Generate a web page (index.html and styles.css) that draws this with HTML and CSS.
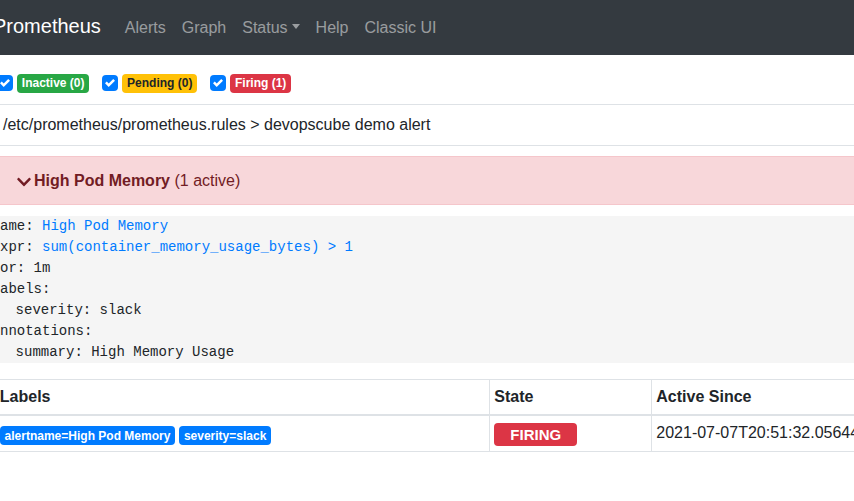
FILE: index.html
```html
<!DOCTYPE html>
<html>
<head>
<meta charset="utf-8">
<link rel="stylesheet" href="styles.css">
</head>
<body>
<nav class="navbar">
  <a class="brand">Prometheus</a>
  <ul class="nav">
    <li class="nav-link">Alerts</li>
    <li class="nav-link">Graph</li>
    <li class="nav-link">Status<span class="caret"></span></li>
    <li class="nav-link">Help</li>
    <li class="nav-link">Classic UI</li>
  </ul>
</nav>
<main class="page">
  <div class="filters">
    <label class="filter">
      <span class="check"><svg viewBox="0 0 8 8" width="10" height="10"><path fill="#fff" d="M6.564.75l-3.59 3.612-1.538-1.55L0 4.26l2.974 2.99L8 2.193z"/></svg></span>
      <span class="badge badge-green">Inactive (0)</span>
    </label>
    <label class="filter">
      <span class="check"><svg viewBox="0 0 8 8" width="10" height="10"><path fill="#fff" d="M6.564.75l-3.59 3.612-1.538-1.55L0 4.26l2.974 2.99L8 2.193z"/></svg></span>
      <span class="badge badge-yellow">Pending (0)</span>
    </label>
    <label class="filter">
      <span class="check"><svg viewBox="0 0 8 8" width="10" height="10"><path fill="#fff" d="M6.564.75l-3.59 3.612-1.538-1.55L0 4.26l2.974 2.99L8 2.193z"/></svg></span>
      <span class="badge badge-red">Firing (1)</span>
    </label>
  </div>

  <div class="group-header">/etc/prometheus/prometheus.rules &gt; devopscube demo alert</div>

  <div class="alert-row">
    <span class="chevron"><svg viewBox="0 0 448 512" width="14" height="16"><path fill="#721c24" d="M207.029 381.476L12.686 187.132c-9.373-9.373-9.373-24.569 0-33.941l22.667-22.667c9.357-9.357 24.522-9.375 33.901-.04L224 284.505l154.745-154.021c9.379-9.335 24.544-9.317 33.901.04l22.667 22.667c9.373 9.373 9.373 24.569 0 33.941L240.971 381.476c-9.373 9.372-24.569 9.372-33.942 0z"/></svg></span><strong>High Pod Memory</strong>&nbsp;(1 active)
  </div>

  <pre class="rule"><code class="rule-code"><div>name: <a class="link">High Pod Memory</a></div><div>expr: <a class="link">sum(container_memory_usage_bytes) &gt; 1</a></div><div>for: 1m</div><div>labels:</div><div class="indent">severity: slack</div><div>annotations:</div><div class="indent">summary: High Memory Usage</div></code></pre>

  <table class="alerts">
    <colgroup>
      <col class="c1"><col class="c2"><col class="c3">
    </colgroup>
    <thead>
      <tr><th>Labels</th><th>State</th><th>Active Since</th></tr>
    </thead>
    <tbody>
      <tr>
        <td><span class="badge badge-blue">alertname=High Pod Memory</span><span class="badge badge-blue">severity=slack</span></td>
        <td><span class="state">FIRING</span></td>
        <td class="since">2021-07-07T20:51:32.056443265Z</td>
      </tr>
    </tbody>
  </table>
</main>
</body>
</html>
```
FILE: styles.css
```css
html, body {
  margin: 0;
  padding: 0;
  background: #fff;
  overflow: hidden;
}
body {
  font-family: "Liberation Sans", Arial, sans-serif;
  font-size: 16px;
  line-height: 1.5;
  color: #212529;
  width: 854px;
}
.navbar {
  height: 55px;
  background: #343a40;
  display: flex;
  align-items: center;
  white-space: nowrap;
}
.brand {
  font-size: 20px;
  line-height: 30px;
  color: #fff;
  margin-left: -7px;
  margin-right: 16px;
  padding-bottom: 4px;
}
.nav {
  list-style: none;
  margin: 0;
  padding: 0;
  display: flex;
}
.nav-link {
  padding: 0 8px;
  color: rgba(255, 255, 255, 0.5);
  line-height: 24px;
}
.caret {
  display: inline-block;
  margin-left: 4px;
  vertical-align: 4px;
  border-top: 5px solid rgba(255, 255, 255, 0.5);
  border-left: 4.5px solid transparent;
  border-right: 4.5px solid transparent;
}
.page {
  margin-left: -5px;
  width: 1100px;
}
.filters {
  display: flex;
  align-items: center;
  margin: 19px 0 12px 2px;
  height: 18px;
}
.filter {
  display: flex;
  align-items: center;
  margin-right: 13px;
}
.check {
  width: 16px;
  height: 16px;
  border-radius: 4px;
  background: #007bff;
  display: flex;
  align-items: center;
  justify-content: center;
  margin-right: 4px;
}
.badge {
  display: inline-block;
  font-size: 12px;
  font-weight: 700;
  line-height: 1;
  padding: 3.5px 4.8px;
  border-radius: 4px;
  color: #fff;
  white-space: nowrap;
}
.badge-green { background: #28a745; }
.badge-yellow { background: #ffc107; color: #212529; }
.badge-red { background: #dc3545; }
.badge-blue { background: #007bff; margin-right: 4px; }
.group-header {
  border-top: 1px solid #dee2e6;
  border-bottom: 1px solid #dee2e6;
  padding: 8px 8px 8px;
  line-height: 24px;
}
.alert-row {
  margin-top: 10px;
  background: #f8d7da;
  border: 1px solid #f5c6cb;
  color: #721c24;
  padding: 12px 18px 11px;
  line-height: 24px;
  display: flex;
  align-items: center;
}
.chevron {
  width: 20px;
  display: flex;
  justify-content: center;
  margin-top: 1px;
}
.rule {
  margin: 11px 0 16px -3.4px;
  background: #f5f5f5;
  font-family: "Liberation Mono", "Courier New", monospace;
  font-size: 14px;
  line-height: 21px;
  color: #212529;
  padding: 0;
}
.rule-code {
  display: block;
  font-family: inherit;
  font-size: inherit;
}
.indent {
  margin-left: 24px;
}
.link {
  color: #007bff;
}
.alerts {
  border-collapse: collapse;
  table-layout: fixed;
  width: 1000px;
}
.c1 { width: 494px; }
.c2 { width: 162px; }
.c3 { width: 344px; }
.alerts th, .alerts td {
  border: 1px solid #dee2e6;
  padding: 4.8px;
  text-align: left;
  line-height: 24px;
  white-space: nowrap;
}
.alerts th {
  vertical-align: middle;
}
.alerts td {
  vertical-align: middle;
}
.alerts thead th {
  border-bottom: 2px solid #dee2e6;
  font-weight: 700;
}
.alerts tr > :first-child {
  border-left: none;
}
.alerts td:first-child {
  vertical-align: top;
}
.alerts td:first-child .badge {
  margin-top: 6px;
  vertical-align: top;
}
.state {
  display: inline-block;
  vertical-align: top;
  background: #dc3545;
  color: #fff;
  font-size: 15px;
  font-weight: 700;
  line-height: 1;
  padding: 3.75px 16px;
  border-radius: 4px;
  margin-top: 3px;
}
.since {
  font-size: 16px;
}
```
